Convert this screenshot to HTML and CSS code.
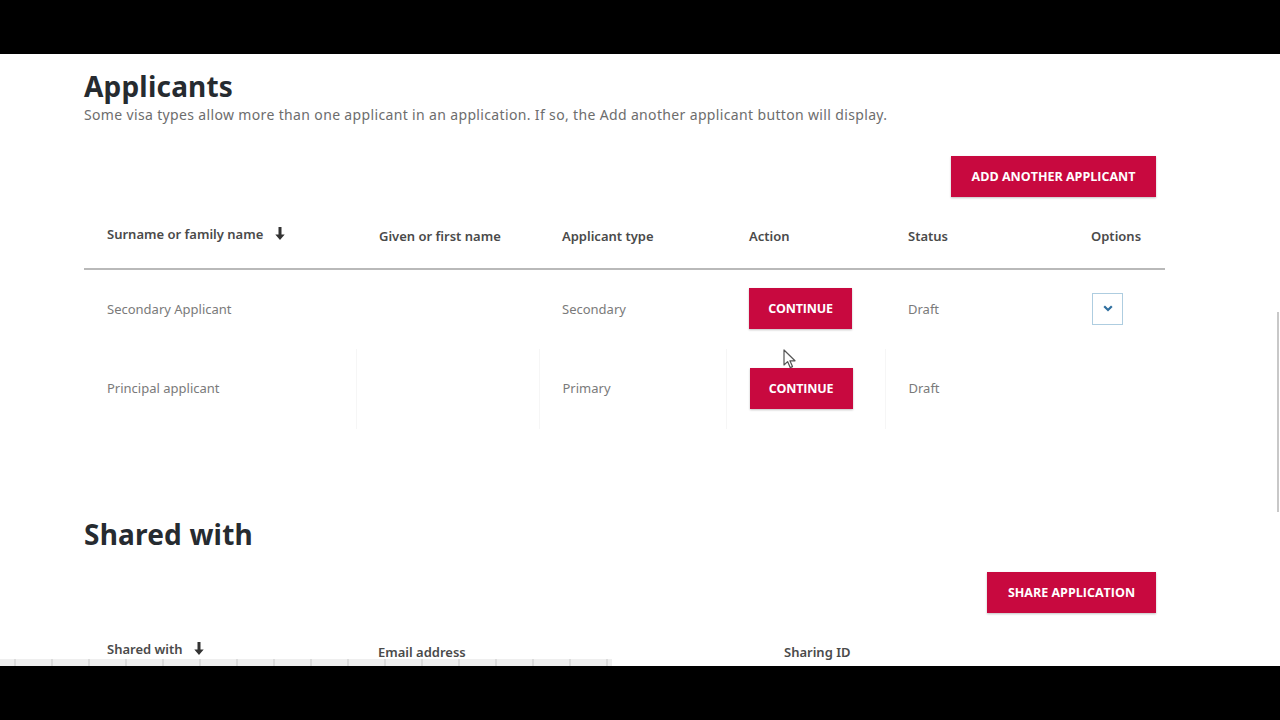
FILE: index.html
```html
<!DOCTYPE html>
<html lang="en">
<head>
    <meta charset="UTF-8">
    <meta name="viewport" content="width=device-width, initial-scale=1.0">
    <title>Applicants</title>
    <link rel="stylesheet" href="styles.css">
</head>
<body>
    <div class="frame">
        <div class="page">
            <section class="block">
                <h1>Applicants</h1>
                <p class="lead">Some visa types allow more than one applicant in an application. If so, the Add another applicant button will display.</p>
                <div class="actions">
                    <button class="btn btn-wide">ADD ANOTHER APPLICANT</button>
                </div>

                <table class="grid">
                    <colgroup>
                        <col style="width: 272px">
                        <col style="width: 183px">
                        <col style="width: 187px">
                        <col style="width: 159px">
                        <col style="width: 183px">
                        <col style="width: 97px">
                    </colgroup>
                    <thead>
                        <tr>
                            <th class="sorted">Surname or family name
                                <svg class="sort-icon" width="10" height="13" viewBox="0 0 10 13"><path d="M3.5 0h3v7.5h3.2L5 13 0.3 7.5h3.2z" fill="#333"/></svg>
                            </th>
                            <th>Given or first name</th>
                            <th>Applicant type</th>
                            <th>Action</th>
                            <th>Status</th>
                            <th>Options</th>
                        </tr>
                    </thead>
                    <tbody>
                        <tr>
                            <td>Secondary Applicant</td>
                            <td></td>
                            <td>Secondary</td>
                            <td><button class="btn btn-small">CONTINUE</button></td>
                            <td>Draft</td>
                            <td>
                                <button class="options-toggle">
                                    <svg width="10" height="7" viewBox="0 0 10 7"><path d="M1.2 1.2 5 5 8.8 1.2" fill="none" stroke="#2f6f9f" stroke-width="2.2"/></svg>
                                </button>
                            </td>
                        </tr>
                        <tr class="faint-lines">
                            <td>Principal applicant</td>
                            <td></td>
                            <td>Primary</td>
                            <td><button class="btn btn-small">CONTINUE</button></td>
                            <td>Draft</td>
                            <td></td>
                        </tr>
                    </tbody>
                </table>
            </section>

            <section class="block shared">
                <h2>Shared with</h2>
                <div class="actions actions-shared">
                    <button class="btn btn-share">SHARE APPLICATION</button>
                </div>
                <div class="shared-head">
                    <span class="shared-col first">Shared with
                        <svg class="sort-icon" width="10" height="13" viewBox="0 0 10 13"><path d="M3.5 0h3v7.5h3.2L5 13 0.3 7.5h3.2z" fill="#333"/></svg>
                    </span>
                    <span class="shared-col email">Email address</span>
                    <span class="shared-col">Sharing ID</span>
                </div>
            </section>
        </div>

        <svg class="cursor" width="14" height="20" viewBox="0 0 14 20"><path d="M1 1v15l3.6-3.4 2.6 6 2.3-1-2.6-5.8H12z" fill="#fff" stroke="#555" stroke-width="1.2" stroke-linejoin="round"/></svg>
        <div class="scroll-thumb"></div>
        <div class="status-strip"></div>
    </div>
</body>
</html>
```

FILE: styles.css
```css
* {
    margin: 0;
    padding: 0;
    box-sizing: border-box;
}

body {
    background: #000;
    font-family: 'Noto Sans', 'Open Sans', sans-serif;
    color: #333;
    height: 720px;
    overflow: hidden;
}

.frame {
    position: relative;
    margin-top: 54px;
    height: 612px;
    background: #fff;
    overflow: hidden;
}

.page {
    padding: 15px 115px 0 84px;
}

h1,
h2 {
    font-size: 28px;
    line-height: 34px;
    font-weight: 700;
    color: #262b30;
    letter-spacing: 0.2px;
}

.lead {
    margin-top: 2px;
    font-size: 14px;
    line-height: 20px;
    color: #6d6d6d;
    letter-spacing: 0.35px;
}

.actions {
    display: flex;
    justify-content: flex-end;
    padding-right: 9px;
    margin-top: 31px;
}

.btn {
    background: #c8093f;
    color: #fff;
    border: none;
    font-family: 'Open Sans', sans-serif;
    font-weight: 700;
    font-size: 12.5px;
    letter-spacing: 0;
    height: 41px;
    box-shadow: 0 1px 2px rgba(0, 0, 0, 0.25);
    cursor: pointer;
}

.btn-wide {
    width: 205px;
}

.btn-small {
    width: 103px;
    letter-spacing: -0.2px;
}

.btn-share {
    width: 169px;
}

.grid {
    width: 1081px;
    border-collapse: collapse;
    table-layout: fixed;
}

.grid th {
    text-align: left;
    font-size: 13px;
    font-weight: 600;
    color: #4a4a4a;
    line-height: 20px;
    padding: 29px 0 22px 23px;
    border-bottom: 2px solid #b9b9b9;
    white-space: nowrap;
}

.grid th.sorted {
    padding-top: 27px;
    padding-bottom: 24px;
}

.sort-icon {
    margin-left: 8px;
    vertical-align: -1px;
}

.grid td {
    height: 80px;
    padding-left: 23px;
    padding-bottom: 2px;
    font-size: 13px;
    color: #7a7a7a;
    vertical-align: middle;
}

.faint-lines td + td {
    border-left: 1px solid #f6f6f6;
}

.faint-lines td:last-child {
    border-left: none;
}

.options-toggle {
    width: 31px;
    height: 32px;
    background: #fff;
    border: 1px solid #aecde0;
    display: flex;
    align-items: center;
    justify-content: center;
    margin-left: 1px;
}

.shared {
    margin-top: 88px;
}

.actions-shared {
    margin-top: 21px;
}

.shared-head {
    display: flex;
    padding: 26px 0 0 23px;
    font-size: 13px;
    font-weight: 600;
    color: #4a4a4a;
    line-height: 20px;
}

.shared-col.first {
    width: 271px;
}

.shared-col.email {
    width: 406px;
    padding-top: 3px;
}

.shared-col:last-child {
    padding-top: 3px;
}

.cursor {
    position: absolute;
    left: 783px;
    top: 295px;
}

.scroll-thumb {
    position: absolute;
    right: 1px;
    top: 258px;
    width: 2px;
    height: 200px;
    background: #c8c8c8;
}

.status-strip {
    position: absolute;
    left: 0;
    bottom: 0;
    width: 612px;
    height: 7px;
    background: repeating-linear-gradient(90deg, #efefef 0 14px, #dcdcdc 14px 16px, #efefef 16px 37px);
}
```
